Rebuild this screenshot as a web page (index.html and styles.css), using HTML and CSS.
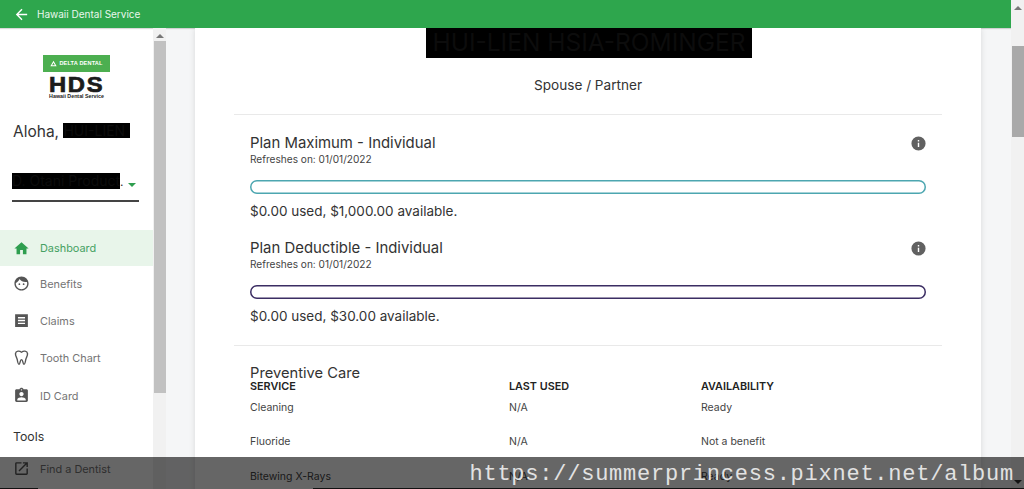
FILE: index.html
```html
<!DOCTYPE html>
<html lang="en">
<head>
<meta charset="utf-8">
<title>Hawaii Dental Service</title>
<link rel="stylesheet" href="styles.css">
</head>
<body>
<div class="page">
  <div class="app">
    <header class="topbar">
      <svg class="back" viewBox="0 0 24 24"><path d="M20 11H7.83l5.59-5.59L12 4l-8 8 8 8 1.41-1.41L7.83 13H20v-2z"/></svg>
      <span class="topbar-title">Hawaii Dental Service</span>
    </header>
    <div class="body-row">
      <aside class="sidebar">
        <div class="logo">
          <div class="logo-delta"><svg class="logo-tri" viewBox="0 0 10 10"><path d="M5 1 9.5 9H.5z M5 4 3 7.6h4z" fill-rule="evenodd"/></svg>DELTA DENTAL</div>
          <div class="logo-hds">HDS</div>
          <div class="logo-sub">Hawaii Dental Service</div>
        </div>
        <div class="aloha">Aloha, <span class="redact redact-name">HUI-LIEN</span></div>
        <div class="select">
          <span class="redact redact-select">D. Otani Product</span><span class="select-dots">.</span>
          <span class="caret"></span>
        </div>
        <nav class="nav">
          <a class="nav-item active"><svg viewBox="0 0 24 24"><path d="M10 20v-6h4v6h5v-8h3L12 3 2 12h3v8z"/></svg>Dashboard</a>
          <a class="nav-item"><svg viewBox="0 0 24 24"><path d="M9 11.75a1.25 1.25 0 1 0 0 2.5 1.25 1.25 0 0 0 0-2.5zm6 0a1.25 1.25 0 1 0 0 2.5 1.25 1.25 0 0 0 0-2.5zM12 2C6.48 2 2 6.48 2 12s4.48 10 10 10 10-4.48 10-10S17.52 2 12 2zm0 18c-4.41 0-8-3.59-8-8 0-.29.02-.58.05-.86 2.36-1.05 4.23-2.98 5.21-5.37C11.07 8.33 14.05 10 17.42 10c.78 0 1.53-.09 2.25-.26.21.71.33 1.47.33 2.26 0 4.41-3.59 8-8 8z"/></svg>Benefits</a>
          <a class="nav-item"><svg viewBox="0 0 24 24"><path d="M3 3h18v18H3z M7 7v2h10V7z M7 11v2h10v-2z M7 15v2h10v-2z" fill-rule="evenodd"/></svg>Claims</a>
          <a class="nav-item"><svg viewBox="0 0 24 24"><path class="tooth" d="M12 4.500C9.500 2.500 4 2 3.500 6.500 3.200 10 5.500 12 6 15c.4 2.500 1 6.500 2.500 6.500 1.800 0 1.200-6.500 3.500-6.500s1.700 6.500 3.500 6.500c1.500 0 2.100-4 2.500-6.500.5-3 2.800-5 2.500-8.500C20 2 14.500 2.500 12 4.500z"/></svg>Tooth Chart</a>
          <a class="nav-item nav-id"><svg viewBox="0 0 24 24"><path d="M19 3h-4.180C14.400 1.840 13.300 1 12 1s-2.400.84-2.820 2H5c-1.100 0-2 .9-2 2v14c0 1.100.9 2 2 2h14c1.100 0 2-.9 2-2V5c0-1.100-.9-2-2-2zm-7 0c.55 0 1 .45 1 1s-.45 1-1 1-1-.45-1-1 .45-1 1-1zm0 4c1.660 0 3 1.340 3 3s-1.340 3-3 3-3-1.340-3-3 1.340-3 3-3zm6 12H6v-1.400c0-2 4-3.100 6-3.100s6 1.100 6 3.100V19z"/></svg>ID Card</a>
        </nav>
        <div class="tools">Tools</div>
        <a class="nav-item nav-find"><svg viewBox="0 0 24 24"><path d="M19 19H5V5h7V3H5a2 2 0 0 0-2 2v14a2 2 0 0 0 2 2h14c1.100 0 2-.9 2-2v-7h-2v7zM14 3v2h3.590l-9.830 9.830 1.410 1.410L19 6.410V10h2V3h-7z"/></svg>Find a Dentist</a>
      </aside>
      <div class="scroll scroll-side">
        <span class="arrow-up"></span>
        <div class="thumb thumb-side"></div>
      </div>
      <main class="main">
        <section class="card">
          <div class="card-head">
            <h1 class="redact person">HUI-LIEN HSIA-ROMINGER</h1>
            <p class="relation">Spouse / Partner</p>
          </div>
          <div class="plans">
            <div class="plan">
              <svg class="info" viewBox="0 0 24 24"><path d="M12 2a10 10 0 1 0 0 20 10 10 0 0 0 0-20zm1 15h-2v-6h2v6zm0-8h-2V7h2v2z"/></svg>
              <h2 class="plan-title">Plan Maximum - Individual</h2>
              <p class="refresh">Refreshes on: 01/01/2022</p>
              <div class="bar bar-teal"></div>
              <p class="amount">$0.00 used, $1,000.00 available.</p>
            </div>
            <div class="plan plan-second">
              <svg class="info" viewBox="0 0 24 24"><path d="M12 2a10 10 0 1 0 0 20 10 10 0 0 0 0-20zm1 15h-2v-6h2v6zm0-8h-2V7h2v2z"/></svg>
              <h2 class="plan-title">Plan Deductible - Individual</h2>
              <p class="refresh">Refreshes on: 01/01/2022</p>
              <div class="bar bar-purple"></div>
              <p class="amount">$0.00 used, $30.00 available.</p>
            </div>
          </div>
          <div class="care">
            <h2 class="care-title">Preventive Care</h2>
            <div class="table">
              <div class="th">SERVICE</div><div class="th">LAST USED</div><div class="th">AVAILABILITY</div>
              <div class="td">Cleaning</div><div class="td">N/A</div><div class="td">Ready</div>
              <div class="td">Fluoride</div><div class="td">N/A</div><div class="td">Not a benefit</div>
              <div class="td">Bitewing X-Rays</div><div class="td">N/A</div><div class="td">Ready</div>
            </div>
          </div>
        </section>
      </main>
    </div>
  </div>
  <div class="scroll scroll-page">
    <span class="arrow-up"></span>
    <div class="thumb thumb-page"></div>
    <span class="arrow-down"></span>
  </div>
</div>
<div class="watermark">https://summerprincess.pixnet.net/album</div>
</body>
</html>
```
FILE: styles.css
```css
* { box-sizing: border-box; }
html, body { margin: 0; height: 489px; overflow: hidden; }
body { font-family: Inter, "Open Sans", sans-serif; color: #2b2b2b; background: #f5f6f7; position: relative; }
h1, h2, p { margin: 0; font-weight: 400; }

.page { display: flex; height: 489px; }
.app { width: 1011px; display: flex; flex-direction: column; }

.topbar { height: 28px; flex: none; background: #2ea64d; display: flex; align-items: center; padding-left: 13px; color: #e9f6ec; font-size: 10px; box-shadow: 0 1px 1px rgba(0,0,0,.15); position: relative; }
.back { width: 17px; height: 17px; fill: #fff; margin-right: 7px; }

.body-row { flex: 1; display: flex; min-height: 0; }

.sidebar { width: 153px; flex: none; background: #fff; overflow: hidden; }
.logo { margin-top: 27px; display: flex; flex-direction: column; align-items: center; }
.logo-delta { width: 67px; height: 17px; background: #4caf50; color: #fff; font: 700 5.600px/17px "Liberation Sans", sans-serif; letter-spacing: .15px; display: flex; align-items: center; justify-content: center; gap: 2px; }
.logo-tri { width: 7px; height: 7px; fill: #fff; }
.logo-hds { font: 900 22px/17px "Liberation Sans", sans-serif; color: #1c1c1c; margin-top: 4px; letter-spacing: 1.600px; -webkit-text-stroke: .7px #1c1c1c; transform: scaleX(1.08); }
.logo-sub { font: 700 5.300px/6px "Liberation Sans", sans-serif; color: #222; }

.aloha { margin: 24px 0 0 13px; font-size: 15.500px; line-height: 18px; color: #333; white-space: nowrap; }
.redact { background: #000; color: #0c0c0c; }
.redact-name { display: inline-block; width: 67px; font-size: 14px; line-height: 15px; overflow: hidden; vertical-align: -1px; }

.select { margin: 32px 14px 0 12px; height: 29px; border-bottom: 2px solid #444; position: relative; white-space: nowrap; display: flex; align-items: flex-start; }
.redact-select { width: 108px; height: 16px; font-size: 14px; line-height: 16px; overflow: hidden; }
.select-dots { font-size: 12px; line-height: 18px; color: #333; }
.caret { position: absolute; left: 116px; top: 10px; border: 4px solid transparent; border-top-color: #2e9e4f; border-bottom: 0; }

.nav { margin-top: 28px; }
.nav-item { display: flex; align-items: center; height: 37px; padding-left: 13px; font-size: 10.900px; color: #757575; }
.nav-item svg { width: 17px; height: 17px; fill: #555; margin-right: 10px; flex: none; }
.nav-item .tooth { fill: none; stroke: #555; stroke-width: 2; }
.nav-item.active { height: 36px; margin-bottom: -1px; background: #e8f5ea; color: #45a162; }
.nav-item.active svg { fill: #2e9e4f; }
.nav-id { margin-top: 1px; }
.tools { margin: 15px 0 0 13px; font-size: 12.300px; line-height: 16px; color: #333; }
.nav-find { margin-top: 5px; }

.scroll { width: 13px; flex: none; background: #f1f1f1; position: relative; }
.arrow-up { position: absolute; left: 3px; top: 6px; border: 4px solid transparent; border-bottom-color: #777; border-top: 0; }
.arrow-down { position: absolute; left: 3px; top: 480px; border: 4px solid transparent; border-top-color: #333; border-bottom: 0; }
.thumb { position: absolute; left: 1px; right: 0; background: #b8b8b8; }
.thumb-side { top: 13px; height: 352px; background: #c1c1c1; }
.thumb-page { top: 46px; height: 91px; background: #a9a9a9; }

.main { flex: 1; padding: 0 30px 0 29px; overflow: hidden; position: relative; }
.card { background: #fff; box-shadow: 0 0 6px rgba(0,0,0,.12); padding: 0 39px; height: 600px; }

.card-head { display: flex; flex-direction: column; align-items: center; border-bottom: 1px solid #e9e9e9; height: 87px; }
.person { width: 326px; height: 31px; margin: -1px 0 0 2px; font-size: 24.500px; line-height: 31px; text-align: center; white-space: nowrap; position: relative; overflow: hidden; }
.relation { margin-top: 18px; font-size: 13.600px; line-height: 18px; color: #333; }

.plans { border-bottom: 1px solid #e9e9e9; padding: 19px 16px 0; height: 231px; }
.plan { position: relative; }
.plan-second { margin-top: 19px; }
.plan-title { font-size: 14.900px; line-height: 18px; color: #333; }
.refresh { font-size: 10.100px; line-height: 14px; color: #444; }
.info { position: absolute; right: -1px; top: 1px; width: 17px; height: 17px; fill: #616161; }
.bar { height: 14px; margin-top: 14px; border-radius: 7px; }
.bar-teal { box-shadow: inset 0 0 0 1.500px #4ca6b0; }
.bar-purple { box-shadow: inset 0 0 0 1.500px #3b2d63; }
.amount { margin-top: 8px; font-size: 13.500px; line-height: 18px; color: #333; }

.care { padding: 19px 16px 0; }
.care-title { font-size: 14.700px; line-height: 16px; color: #333; }
.table { display: grid; grid-template-columns: 259px 192px 1fr; }
.th { font-size: 10.800px; line-height: 12px; font-weight: 600; color: #222; margin-bottom: 8px; }
.td { font-size: 10.500px; line-height: 14px; height: 34.300px; color: #444; }

.watermark { position: absolute; left: 0; right: 0; top: 457px; height: 32px; background: linear-gradient(90deg, #111 38px, transparent 38px, transparent 313px, #111 313px) bottom / 100% 1px no-repeat, rgba(0,0,0,.6); color: #e2e2e2; font: 22px/32px "Liberation Mono", monospace; letter-spacing: .76px; text-align: right; padding: 2px 10px 0 0; white-space: nowrap; }
```
